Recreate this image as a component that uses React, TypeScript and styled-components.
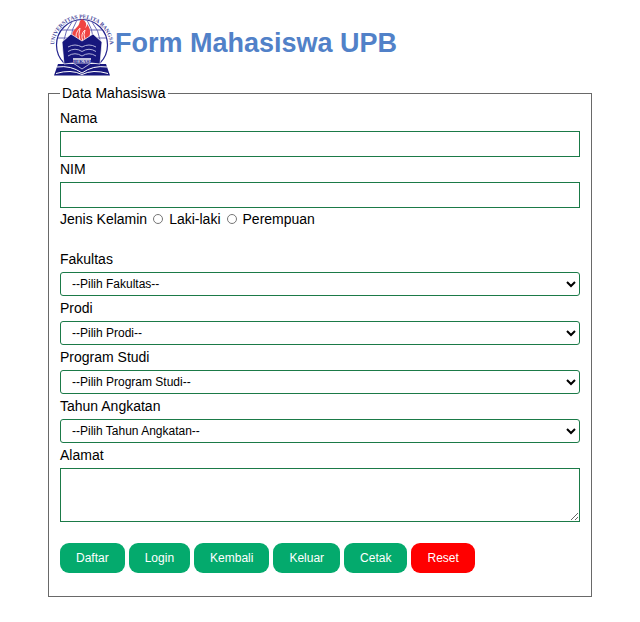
import React from "react";
import styled, { createGlobalStyle } from "styled-components";

const GlobalStyle = createGlobalStyle`
  * { box-sizing: border-box; }
  body {
    margin: 0;
    background: #fff;
    color: #000;
    font-family: "Liberation Sans", Arial, sans-serif;
    font-size: 14px;
  }
`;

const Page = styled.main`
  padding: 12px 48px 24px;
`;

const Header = styled.header`
  display: flex;
  align-items: center;
  height: 66px;
  margin-bottom: 7px;
`;

const LogoImage = styled.svg`
  display: block;
  flex: none;
  width: 66px;
  height: 66px;
`;

const Title = styled.h1`
  margin: 0 0 4px 1px;
  color: #5181c8;
  font-size: 27px;
  line-height: 32px;
  white-space: nowrap;
`;

const Group = styled.fieldset`
  min-width: 0;
  margin: 0;
  padding: 4px 11px 23px;
  border: 1px solid #696969;
`;

const Legend = styled.legend`
  padding: 0 2px;
  line-height: 17px;
`;

const Label = styled.label`
  display: block;
  line-height: 25px;
`;

const TextInput = styled.input`
  display: block;
  width: 100%;
  height: 26px;
  padding: 4px 12px;
  border: 1px solid #1b7a48;
  border-radius: 0;
  font: inherit;
`;

const Select = styled.select`
  display: block;
  width: 100%;
  height: 24px;
  padding: 0 7px;
  border: 1px solid #1b7a48;
  border-radius: 3px;
  background: #fff;
  color: #000;
  font-family: inherit;
  font-size: 12px;
`;

const TextArea = styled.textarea`
  display: block;
  width: 100%;
  height: 54px;
  padding: 4px 12px;
  border: 1px solid #1b7a48;
  font: inherit;
  resize: both;
`;

const RadioRow = styled.div`
  display: flex;
  align-items: center;
  gap: 6px;
  height: 22px;
  margin-bottom: 17px;
`;

const RadioLabel = styled.label`
  display: flex;
  align-items: center;
  gap: 6px;
`;

const Radio = styled.input`
  appearance: none;
  width: 10px;
  height: 10px;
  margin: 0;
  border: 1px solid #767676;
  border-radius: 50%;
  &:checked { border: 3px solid #0075ff; }
`;

const Actions = styled.div`
  display: flex;
  flex-wrap: wrap;
  gap: 4px;
  margin-top: 21px;
`;

const Button = styled.button<{ $danger?: boolean }>`
  height: 30px;
  padding: 0 16px;
  border: 0;
  border-radius: 9px;
  background: ${(p) => (p.$danger ? "#ff0000" : "#04aa6d")};
  color: #fff;
  font-family: inherit;
  font-size: 12px;
  cursor: pointer;
`;

function Logo() {
  return (
    <LogoImage viewBox="4 4 66 66" role="img" aria-label="Universitas Pelita Bangsa">
      <defs>
        <path id="ring" d="M12.500 50 A28 28 0 1 1 63.500 50" />
      </defs>
      <circle cx="38" cy="37" r="25.5" fill="#fff" stroke="#24248f" strokeWidth="1.2" />
      <g fill="none" stroke="#5c5cb0" strokeWidth="0.9">
        <path d="M38 12V57M14 30H62M18 22H58M28 14Q14 31 23 56M48 14Q62 31 53 56M33 12Q22 30 30 50M43 12Q54 30 46 50" />
      </g>
      <text fill="#49499b" fontSize="5.6" fontWeight="bold" fontFamily="Liberation Serif, serif">
        <textPath href="#ring" startOffset="50%" textAnchor="middle">UNIVERSITAS PELITA BANGSA</textPath>
      </text>
      <path d="M31 32C26 26 29 23 33 19C37 15 34 14 38 11C43 14 43 17 41 20C43 19 43 17 43 16C48 22 46 28 44 32L38 36Z" fill="#f04443" />
      <path d="M33 31Q30 26 36 20Q34 26 36 33M39 33Q36 26 41 22Q39 27 41 31" fill="none" stroke="#ffe3e0" strokeWidth="1" />
      <path d="M14 56L62 56L66 67.500H10Z" fill="#17177d" />
      <path d="M13 59Q27 57 38 65Q49 57 63 59M12 65.500Q27 61 38 66.500Q49 61 64 65.500" fill="none" stroke="#fff" strokeWidth="1" />
      <path d="M18 34L27 26L38 33L49 26L58 34L56 56L47 55L38 61L29 55L20 56Z" fill="#17177d" stroke="#fff" strokeWidth="0.7" />
      <g fill="none" stroke="#c3c3e4" strokeWidth="0.9">
        <path d="M24 39Q31 35 38 39Q45 35 52 39M24 43.500Q31 39 38 43.500Q45 39 52 43.500M24 48Q31 43.500 38 48Q45 43.500 52 48" />
      </g>
      <path d="M29 50H47V55.500H29Z" fill="#c0c0dd" />
      <text x="38" y="54.500" textAnchor="middle" fill="#17178a" fontSize="4.8" fontWeight="bold" fontFamily="Liberation Serif, serif">BEKASI</text>
    </LogoImage>
  );
}

const selects = [
  { id: "fakultas", label: "Fakultas" },
  { id: "prodi", label: "Prodi" },
  { id: "program", label: "Program Studi" },
  { id: "angkatan", label: "Tahun Angkatan" },
];

export default function App() {
  return (
    <>
      <GlobalStyle />
      <Page>
        <Header>
          <Logo />
          <Title>Form Mahasiswa UPB</Title>
        </Header>
        <form onSubmit={(e) => e.preventDefault()}>
          <Group>
            <Legend>Data Mahasiswa</Legend>
            <Label htmlFor="nama">Nama</Label>
            <TextInput id="nama" name="nama" type="text" />
            <Label htmlFor="nim">NIM</Label>
            <TextInput id="nim" name="nim" type="text" />
            <RadioRow role="radiogroup" aria-labelledby="jenis-kelamin">
              <span id="jenis-kelamin">Jenis Kelamin</span>
              <RadioLabel>
                <Radio type="radio" name="kelamin" value="L" />
                Laki-laki
              </RadioLabel>
              <RadioLabel>
                <Radio type="radio" name="kelamin" value="P" />
                Perempuan
              </RadioLabel>
            </RadioRow>
            {selects.map(({ id, label }) => (
              <React.Fragment key={id}>
                <Label htmlFor={id}>{label}</Label>
                <Select id={id} name={id}>
                  <option>{`--Pilih ${label}--`}</option>
                </Select>
              </React.Fragment>
            ))}
            <Label htmlFor="alamat">Alamat</Label>
            <TextArea id="alamat" name="alamat" />
            <Actions>
              <Button type="submit">Daftar</Button>
              <Button type="button">Login</Button>
              <Button type="button">Kembali</Button>
              <Button type="button">Keluar</Button>
              <Button type="button">Cetak</Button>
              <Button type="reset" $danger>Reset</Button>
            </Actions>
          </Group>
        </form>
      </Page>
    </>
  );
}
